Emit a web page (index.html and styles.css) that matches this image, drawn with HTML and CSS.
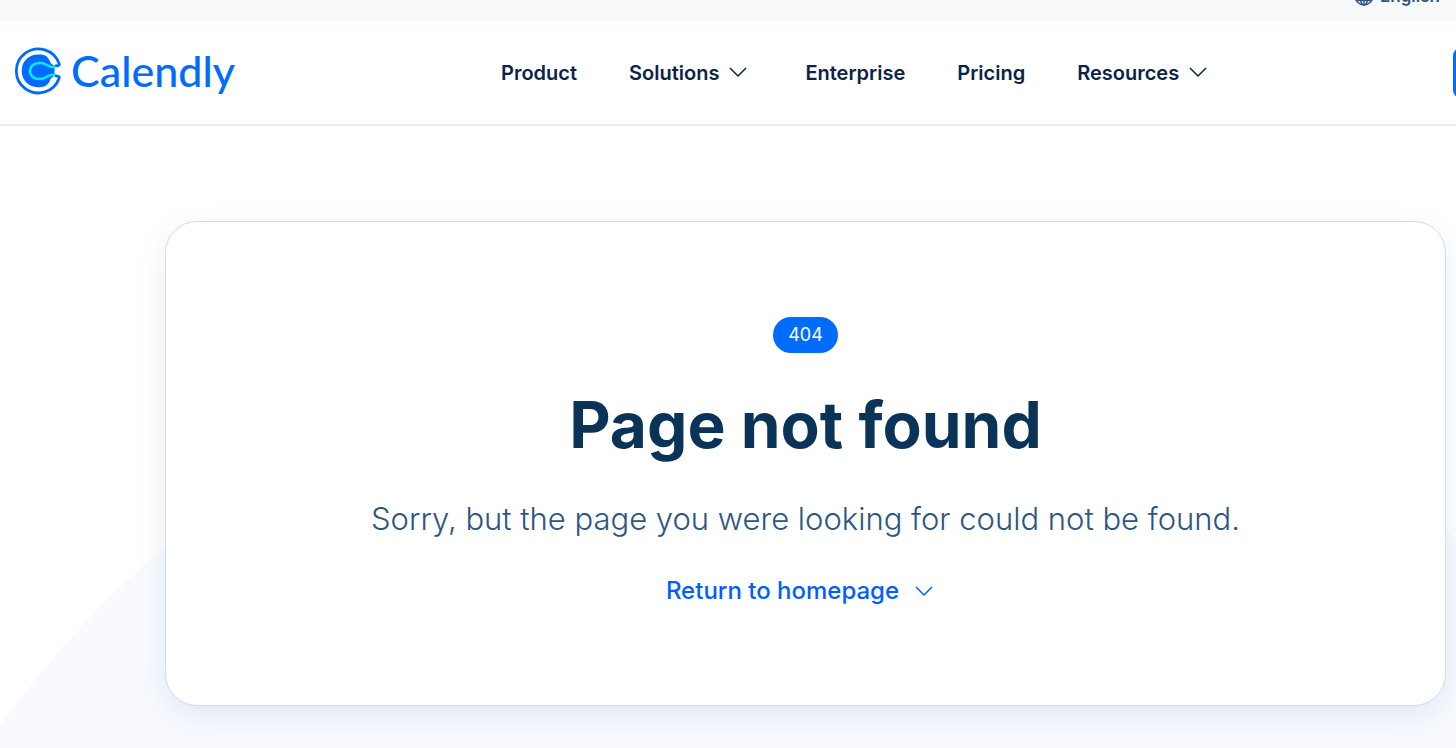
FILE: index.html
```html
<!doctype html>
<html lang="en">
  <head>
    <meta charset="UTF-8" />
    <meta name="viewport" content="width=device-width, initial-scale=1.0" />
    <link rel="stylesheet" href="styles.css">
    <title>Page not found | Calendly</title>
  </head>
  <body>
    <!-- Language bar, partly scrolled off the top -->
    <div class="topbar">
      <button class="language" type="button">
        <svg width="20" height="20" viewBox="0 0 20 20" fill="none" stroke="currentColor" stroke-width="1.4" aria-hidden="true">
          <circle cx="10" cy="10" r="9" />
          <ellipse cx="10" cy="10" rx="4" ry="9" />
          <path d="M10 1v18M1 10h18M3 5.500h14M3 14.500h14" />
        </svg>
        English
      </button>
    </div>
    <header class="header">
      <a class="logo" href="#">
        <svg width="50" height="56" viewBox="0 0 50 56" fill="none" aria-hidden="true">
          <path d="M41.500 20.500C39 20 37.500 18 36.500 15.500C34.500 11 31.500 9.500 26.500 9.500H25C15.500 9.500 8.700 16.500 8.700 25.800C8.700 35.200 15.500 42.200 25 42.200H26.500C31.500 42.200 34.500 40.500 36.500 36.500C37.500 33.500 39 31.800 41.500 31Z" fill="#006bff" />
          <path d="M42 21.200L45.600 20.300Q46.600 19.900 46.100 18.600A22 22 0 1 0 46.100 33.200Q46.600 31.900 45.600 31.500L42 30.600" stroke="#006bff" stroke-width="2.800" />
          <path d="M42.200 22.300C37.500 22.300 36 21.500 33.500 19.700C31.500 18.300 29.500 18 26 18C20.800 18 17 21.300 17 26C17 30.700 20.800 34 26 34C29.500 34 31.500 33.500 33.500 32C36 30.100 37.500 29.500 42.200 29.500" stroke="#0ae8f0" stroke-width="2.600" />
        </svg>
        <span>Calendly</span>
      </a>
      <nav class="nav">
        <a href="#">Product</a>
        <button type="button">
          Solutions
          <svg class="chevron" viewBox="0 0 18 11" aria-hidden="true"><path d="M1 1l8 8 8-8" /></svg>
        </button>
        <a href="#">Enterprise</a>
        <a href="#">Pricing</a>
        <button type="button">
          Resources
          <svg class="chevron" viewBox="0 0 18 11" aria-hidden="true"><path d="M1 1l8 8 8-8" /></svg>
        </button>
      </nav>
      <button class="menu" type="button" aria-label="Menu"></button>
    </header>
    <main class="main">
      <section class="card">
        <span class="badge">404</span>
        <h1>Page not found</h1>
        <p>Sorry, but the page you were looking for could not be found.</p>
        <a class="home" href="#">
          Return to homepage
          <svg class="chevron" viewBox="0 0 18 11" aria-hidden="true"><path d="M1 1l8 8 8-8" /></svg>
        </a>
      </section>
    </main>
  </body>
</html>
```

FILE: styles.css
```css
* {
  box-sizing: border-box;
}

html,
body {
  height: 100%;
  margin: 0;
}

body {
  display: flex;
  flex-direction: column;
  overflow: hidden;
  background: #fff;
  font-family: Inter, "Liberation Sans", sans-serif;
}

a {
  text-decoration: none;
}

button {
  border: 0;
  padding: 0;
  background: none;
  font: inherit;
  color: inherit;
}

.topbar {
  display: flex;
  flex-shrink: 0;
  justify-content: flex-end;
  align-items: center;
  height: 50px;
  margin-top: -29px;
  padding-right: 16px;
  background: #f8f9fb;
}

.language {
  display: flex;
  align-items: center;
  gap: 6px;
  color: #2f5680;
  font-size: 17px;
  font-weight: 600;
}

.header {
  display: flex;
  flex-shrink: 0;
  align-items: center;
  height: 105px;
  padding-left: 13px;
  border-bottom: 2px solid #e9eff5;
}

.logo {
  display: flex;
  align-items: center;
  gap: 8px;
  width: 488px;
  color: #006bff;
  font-family: Lato, sans-serif;
  font-size: 43px;
  font-weight: 500;
  line-height: 48px;
}

.logo span {
  padding-bottom: 4px;
}

.nav {
  display: flex;
  align-items: center;
  gap: 52px;
  color: #0b2346;
  font-size: 20px;
  font-weight: 600;
}

.nav a {
  color: inherit;
}

.nav button {
  display: flex;
  align-items: center;
  gap: 10px;
  padding-right: 6px;
}

.chevron {
  width: 18px;
  height: 11px;
  fill: none;
  stroke: currentColor;
  stroke-width: 1.5;
}

.menu {
  flex-shrink: 0;
  width: 48px;
  height: 50px;
  margin-left: auto;
  margin-right: -45px;
  border-radius: 8px;
}

.header .menu {
  background: #006bff;
}

.main {
  position: relative;
  flex: 1;
  padding: 95px 10px 42px 165px;
  overflow: hidden;
}

/* Large pale circle behind the card */
.main::before {
  content: "";
  position: absolute;
  top: 182px;
  left: calc(56% - 1004px);
  width: 2008px;
  height: 2008px;
  border-radius: 50%;
  background: #f8faff;
}

.card {
  position: relative;
  display: flex;
  flex-direction: column;
  align-items: center;
  padding: 95px 32px 96px;
  border: 1px solid #d0deec;
  border-radius: 32px;
  background: #fff;
  box-shadow: 0 10px 30px rgba(71, 103, 136, 0.12);
  text-align: center;
}

.badge {
  padding: 0 15px;
  border-radius: 18px;
  background: #006bff;
  color: #fff;
  font-size: 18px;
  line-height: 36px;
}

h1 {
  margin: 32px 0;
  color: #0a3358;
  font-size: 64px;
  font-weight: 700;
  line-height: 80px;
}

p {
  margin: 0 0 32px;
  color: #2f5680;
  font-size: 31px;
  font-weight: 300;
  line-height: 44px;
}

.home {
  display: flex;
  align-items: center;
  gap: 16px;
  padding-right: 12px;
  color: #0060ff;
  font-size: 24px;
  font-weight: 500;
  line-height: 36px;
}
```
